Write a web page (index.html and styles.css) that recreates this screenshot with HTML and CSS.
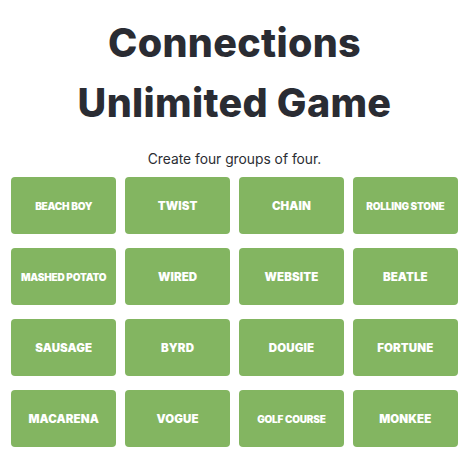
FILE: index.html
```html
<!DOCTYPE html>
<html lang="en">
<head>
<meta charset="utf-8">
<title>Connections Unlimited Game</title>
<link rel="stylesheet" href="styles.css">
</head>
<body>
<main class="page">
  <h1 class="title">Connections<br>Unlimited Game</h1>
  <p class="subtitle">Create four groups of four.</p>
  <div class="board">
    <div class="tile small">BEACH BOY</div>
    <div class="tile">TWIST</div>
    <div class="tile">CHAIN</div>
    <div class="tile small">ROLLING STONE</div>
    <div class="tile small">MASHED POTATO</div>
    <div class="tile">WIRED</div>
    <div class="tile">WEBSITE</div>
    <div class="tile">BEATLE</div>
    <div class="tile">SAUSAGE</div>
    <div class="tile">BYRD</div>
    <div class="tile">DOUGIE</div>
    <div class="tile">FORTUNE</div>
    <div class="tile">MACARENA</div>
    <div class="tile">VOGUE</div>
    <div class="tile small">GOLF COURSE</div>
    <div class="tile">MONKEE</div>
  </div>
</main>
</body>
</html>
```
FILE: styles.css
```css
html, body {
  margin: 0;
  padding: 0;
  background: #ffffff;
}
body {
  font-family: Inter, "Open Sans", "DejaVu Sans", sans-serif;
  color: #2b2d33;
}
.page {
  padding: 13px 10px 0 11px;
}
.title {
  margin: 0;
  text-align: center;
  font-size: 39.5px;
  line-height: 60px;
  font-weight: 800;
  letter-spacing: 0.3px;
  color: #2a2c33;
}
.subtitle {
  margin: 16px 0 0;
  text-align: center;
  font-size: 13.8px;
  line-height: 20px;
  color: #2b2d33;
}
.board {
  margin-top: 8px;
  display: grid;
  grid-template-columns: repeat(4, 1fr);
  column-gap: 8.5px;
  row-gap: 14px;
}
.tile {
  height: 57px;
  display: flex;
  align-items: center;
  justify-content: center;
  background: #83b561;
  border-radius: 4px;
  color: #ffffff;
  font-weight: 900;
  font-size: 11.5px;
  letter-spacing: 0.1px;
  text-align: center;
}
.tile.small {
  font-size: 10px;
  letter-spacing: -0.2px;
}
```
